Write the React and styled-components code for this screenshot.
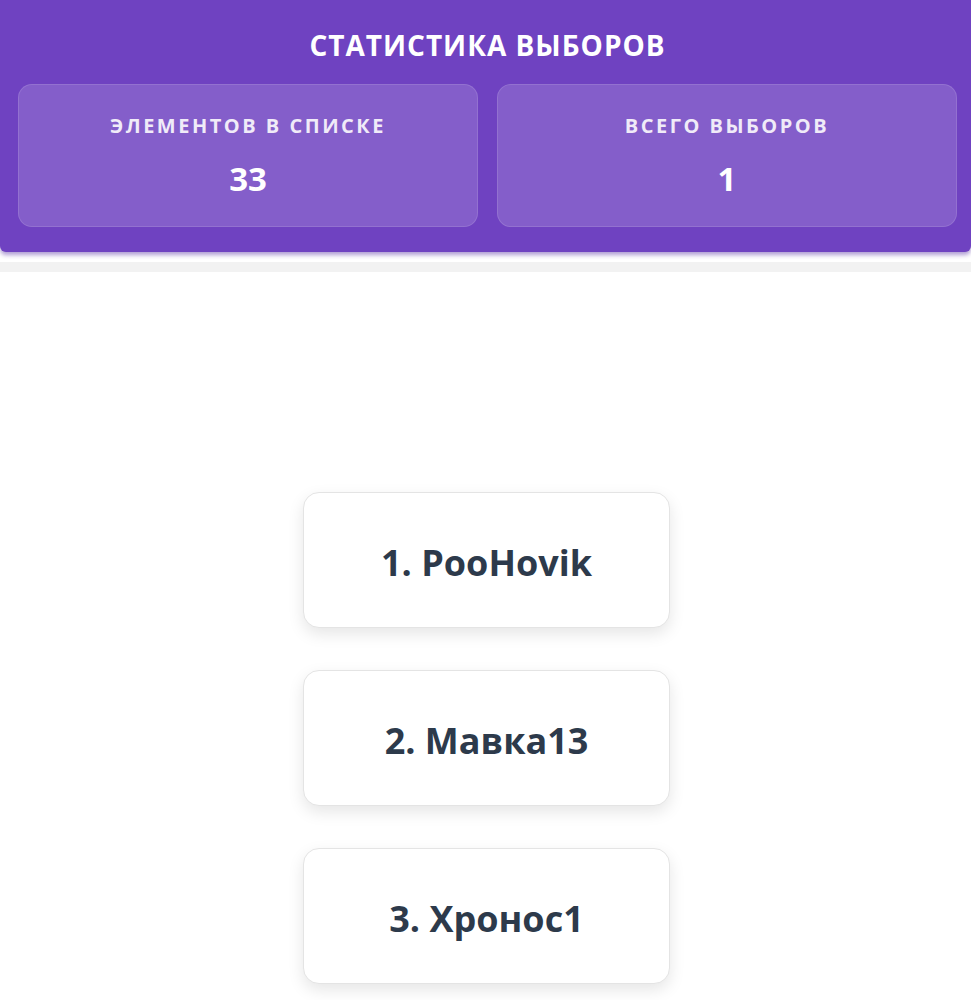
import React from "react";
import styled, { createGlobalStyle } from "styled-components";

const Global = createGlobalStyle`
  html, body { margin: 0; padding: 0; background: #ffffff; }
  body { font-family: "Open Sans", "Noto Sans", sans-serif; }
`;

const Page = styled.div`
  width: 971px;
  min-height: 1000px;
  background: #ffffff;
`;

const Header = styled.header`
  background: #6f42c1;
  padding: 26px 14px 25px 18px;
  border-radius: 0 0 6px 6px;
  box-shadow: 0 3px 4px rgba(80, 40, 160, 0.45);
`;

const Title = styled.h2`
  margin: 0 0 20px;
  text-align: center;
  color: #ffffff;
  font-size: 28px;
  line-height: 38px;
  font-weight: 700;
  letter-spacing: 1px;
`;

const StatsGrid = styled.div`
  display: grid;
  grid-template-columns: 1fr 1fr;
  gap: 19px;
`;

const StatCard = styled.div`
  background: rgba(255, 255, 255, 0.15);
  border: 1px solid rgba(255, 255, 255, 0.12);
  border-radius: 14px;
  height: 143px;
  box-sizing: border-box;
  display: flex;
  flex-direction: column;
  align-items: center;
  padding-top: 29px;
  color: #ffffff;
`;

const StatLabel = styled.div`
  font-size: 20px;
  line-height: 24px;
  font-weight: 700;
  letter-spacing: 2.5px;
  opacity: 0.88;
  text-transform: uppercase;
`;

const StatValue = styled.div`
  margin-top: 19px;
  font-size: 33px;
  line-height: 44px;
  font-weight: 700;
`;

const Divider = styled.div`
  height: 10px;
  margin-top: 10px;
  background: #f2f2f2;
`;

const List = styled.div`
  display: flex;
  flex-direction: column;
  align-items: center;
  gap: 42px;
  padding-top: 220px;
  padding-left: 2px;
`;

const Item = styled.div`
  width: 367px;
  height: 136px;
  box-sizing: border-box;
  background: #ffffff;
  border: 1px solid #e4e4e4;
  border-radius: 16px;
  box-shadow: 0 6px 16px rgba(0, 0, 0, 0.1);
  display: flex;
  align-items: center;
  justify-content: center;
  padding-top: 4px;
  color: #2d3a4b;
  font-size: 36px;
  font-weight: 700;
`;

const stats = [
  { label: "Элементов в списке", value: 33 },
  { label: "Всего выборов", value: 1 },
];

const items = ["PooHovik", "Мавка13", "Хронос1"];

export default function App() {
  return (
    <Page>
      <Global />
      <Header>
        <Title>СТАТИСТИКА ВЫБОРОВ</Title>
        <StatsGrid>
          {stats.map((s) => (
            <StatCard key={s.label}>
              <StatLabel>{s.label}</StatLabel>
              <StatValue>{s.value}</StatValue>
            </StatCard>
          ))}
        </StatsGrid>
      </Header>
      <Divider />
      <List>
        {items.map((name, i) => (
          <Item key={name}>
            {i + 1}. {name}
          </Item>
        ))}
      </List>
    </Page>
  );
}
